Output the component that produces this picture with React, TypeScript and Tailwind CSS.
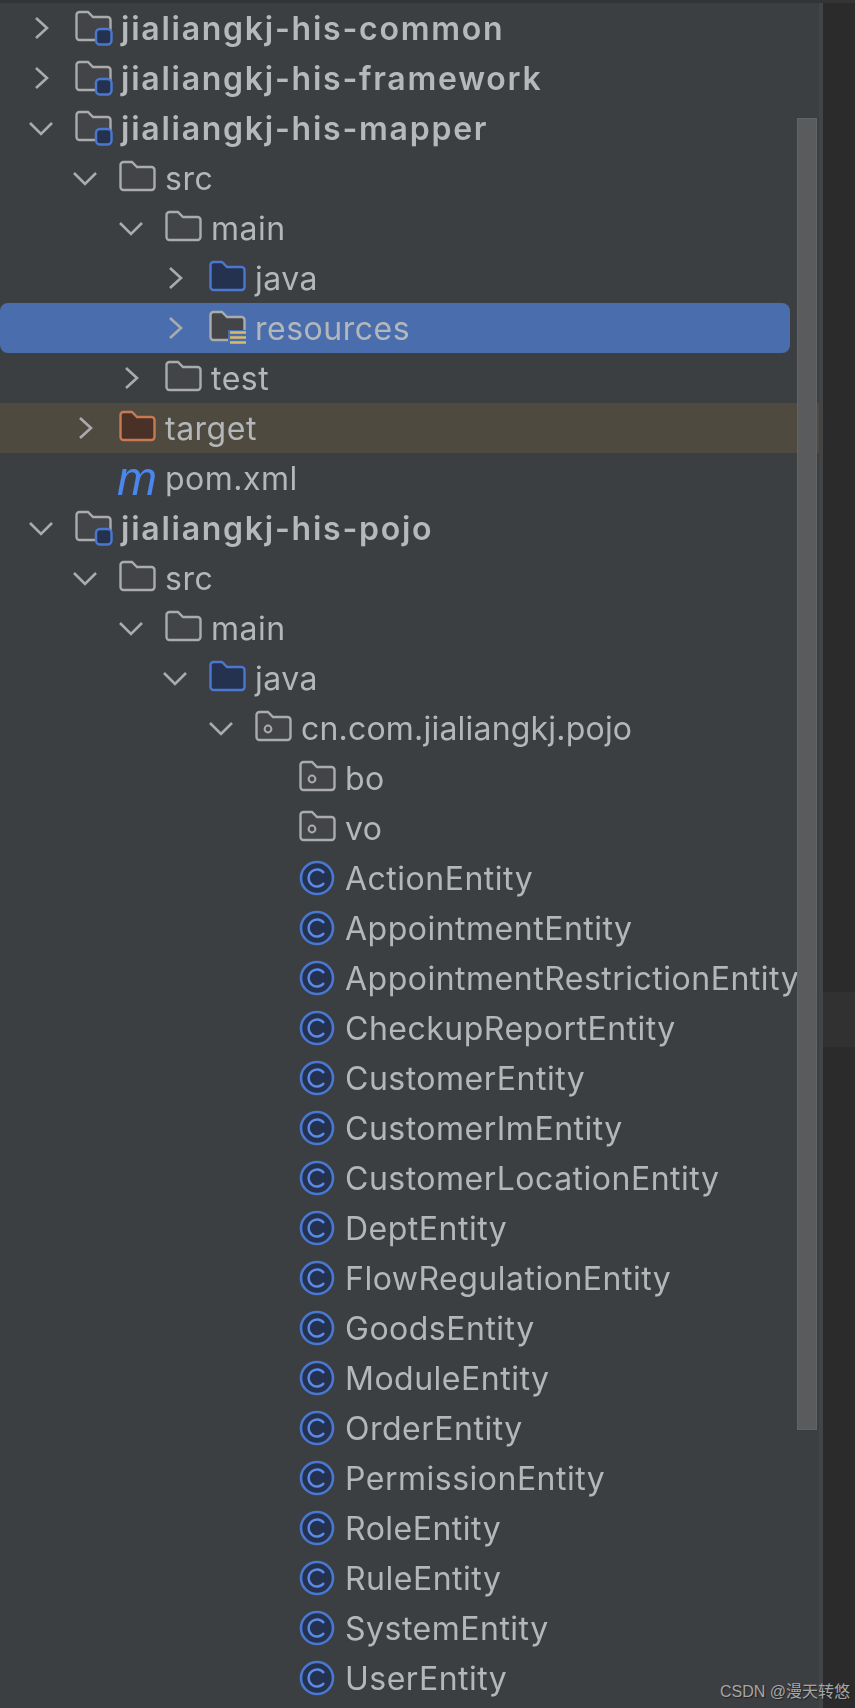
const FONT = "font-['Inter','Noto_Sans',sans-serif]";

type IconKind = "module" | "folder" | "source" | "resources" | "target" | "package" | "class" | "maven";

interface Row {
  level: number;
  name: string;
  icon: IconKind;
  arrow?: "right" | "down";
  bold?: boolean;
  tone?: "selected" | "ignored";
  tight?: boolean;
}

const classes = [
  "ActionEntity",
  "AppointmentEntity",
  "AppointmentRestrictionEntity",
  "CheckupReportEntity",
  "CustomerEntity",
  "CustomerImEntity",
  "CustomerLocationEntity",
  "DeptEntity",
  "FlowRegulationEntity",
  "GoodsEntity",
  "ModuleEntity",
  "OrderEntity",
  "PermissionEntity",
  "RoleEntity",
  "RuleEntity",
  "SystemEntity",
  "UserEntity",
];

const rows: Row[] = [
  { level: 0, name: "jialiangkj-his-common", icon: "module", arrow: "right", bold: true },
  { level: 0, name: "jialiangkj-his-framework", icon: "module", arrow: "right", bold: true },
  { level: 0, name: "jialiangkj-his-mapper", icon: "module", arrow: "down", bold: true },
  { level: 1, name: "src", icon: "folder", arrow: "down" },
  { level: 2, name: "main", icon: "folder", arrow: "down" },
  { level: 3, name: "java", icon: "source", arrow: "right" },
  { level: 3, name: "resources", icon: "resources", arrow: "right", tone: "selected" },
  { level: 2, name: "test", icon: "folder", arrow: "right" },
  { level: 1, name: "target", icon: "target", arrow: "right", tone: "ignored" },
  { level: 1, name: "pom.xml", icon: "maven" },
  { level: 0, name: "jialiangkj-his-pojo", icon: "module", arrow: "down", bold: true },
  { level: 1, name: "src", icon: "folder", arrow: "down" },
  { level: 2, name: "main", icon: "folder", arrow: "down" },
  { level: 3, name: "java", icon: "source", arrow: "down" },
  { level: 4, name: "cn.com.jialiangkj.pojo", icon: "package", arrow: "down", tight: true },
  { level: 5, name: "bo", icon: "package" },
  { level: 5, name: "vo", icon: "package" },
  ...classes.map((name): Row => ({ level: 5, name, icon: "class" })),
];

const indent = ["pl-[26px]", "pl-[70px]", "pl-[116px]", "pl-[160px]", "pl-[206px]", "pl-[250px]"];

const FOLDER = "M1.5 5a3 3 0 0 1 3-3h8.5l5 5h14.5a3 3 0 0 1 3 3v17a3 3 0 0 1-3 3H4.5a3 3 0 0 1-3-3Z";

function Arrow({ dir }: { dir: "right" | "down" }) {
  return (
    <svg viewBox="0 0 30 30" className="h-[30px] w-[30px]" fill="none" stroke="#a9abad" strokeWidth="2.6">
      <path d={dir === "right" ? "M10 5l11 10-11 10" : "M4 10l11 11 11-11"} />
    </svg>
  );
}

function Icon({ kind }: { kind: IconKind }) {
  if (kind === "maven") {
    return <span className="-ml-[2px] block w-[37px] text-[48px] leading-[33px] font-normal italic text-[#4a86ee] [font-family:'Liberation_Sans',sans-serif]">m</span>;
  }
  if (kind === "class") {
    return (
      <svg viewBox="0 0 36 36" className="h-[36px] w-[36px]" fill="none">
        <circle cx="18" cy="18" r="16" fill="#25324f" stroke="#4a78d0" strokeWidth="2.6" />
        <path d="M25 13a8.5 8.5 0 1 0 0 10" stroke="#5b8ce8" strokeWidth="2.4" />
      </svg>
    );
  }
  const stroke = kind === "source" ? "#4a78d0" : kind === "target" ? "#c7794f" : "#a9abad";
  const fill = kind === "source" ? "#25324f" : kind === "target" ? "#4a3128" : "#434448";
  return (
    <svg viewBox="0 0 38 36" className="h-[36px] w-[38px]" fill="none">
      <path d={FOLDER} fill={fill} stroke={stroke} strokeWidth="2.4" />
      {kind === "package" && <circle cx="13" cy="19" r="3.4" stroke={stroke} strokeWidth="2" />}
      {kind === "module" && (
        <rect x="21" y="19" width="15.5" height="15.5" rx="4" fill="#25324f" stroke="#4a78d0" strokeWidth="2.4" />
      )}
      {kind === "resources" && (
        <>
          <rect x="19" y="20" width="19" height="15" fill="#4a6ead" />
          <path d="M21 22.5h16M21 27.5h16M21 32.5h16" stroke="#dcbb66" strokeWidth="2.6" />
        </>
      )}
    </svg>
  );
}

function TreeRow({ row }: { row: Row }) {
  const tone =
    row.tone === "selected"
      ? "w-[790px] rounded-lg bg-[#4a6ead]"
      : row.tone === "ignored"
        ? "bg-[#4f4a3f]"
        : "";
  const label = row.bold
    ? "pt-[1px] text-[32px] font-semibold tracking-[1.75px] text-[#b6b9bb]"
    : row.tight
      ? "pt-[1px] text-[32px] tracking-[0.2px] text-[#b4b7b9]"
      : "pt-[1px] text-[32px] tracking-[0.5px] text-[#b4b7b9]";
  return (
    <div className={`flex h-[50px] shrink-0 items-center whitespace-nowrap ${indent[row.level]} ${tone}`}>
      <div className="flex items-center blur-[0.55px]">
        <div className="flex w-[49px] shrink-0 items-center">{row.arrow && <Arrow dir={row.arrow} />}</div>
        <div className="flex w-[46px] shrink-0 items-center">
          <Icon kind={row.icon} />
        </div>
        <span className={label}>{row.name}</span>
      </div>
    </div>
  );
}

export default function App() {
  return (
    <div className={`relative flex h-[1708px] w-[855px] overflow-hidden bg-[#2b2b2b] ${FONT}`}>
      <div className="flex w-[819px] shrink-0 flex-col overflow-hidden bg-[#3c3f41] pt-[3px]">
        {rows.map((row, i) => (
          <TreeRow key={i} row={row} />
        ))}
      </div>
      <div className="w-[4px] shrink-0 bg-[#424446]" />
      <div className="flex flex-1 flex-col">
        <div className="h-[992px] bg-[#2b2b2b]" />
        <div className="h-[55px] bg-[#313131]" />
      </div>
      {/* overlay scrollbar */}
      <div className="absolute left-[797px] top-[118px] h-[1312px] w-[20px] border border-[#626365] bg-[#5a5b5d]" />
      <div className="absolute inset-x-0 top-0 h-[3px] bg-[#333436]" />
      {/* watermark */}
      <div className="absolute right-[5px] top-[1682px] whitespace-nowrap text-[16px] leading-[20px] text-[#a6a6a6] [font-family:'Liberation_Sans','Noto_Sans_CJK_SC',sans-serif] [text-shadow:1px_1px_1px_#222]">
        CSDN @漫天转悠
      </div>
    </div>
  );
}
